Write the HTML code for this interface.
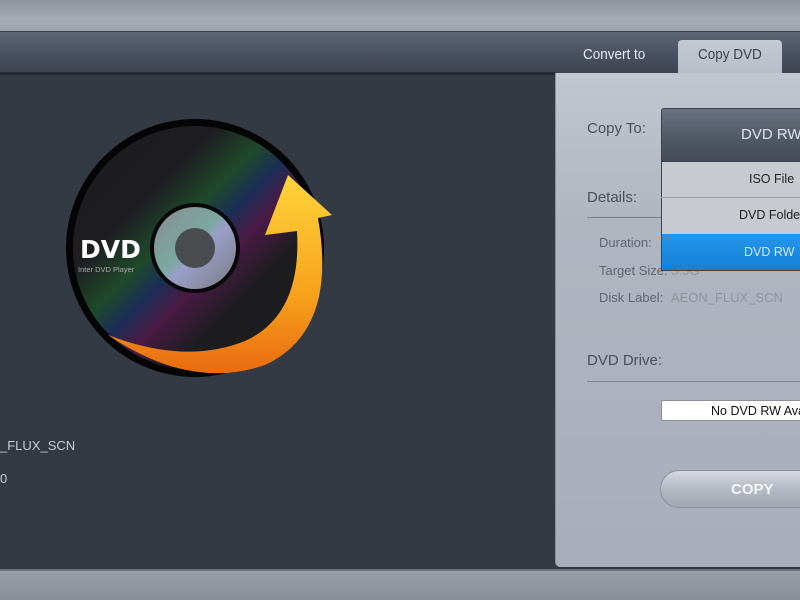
<!DOCTYPE html>
<html><head><style>
*{margin:0;padding:0;box-sizing:border-box}
body{width:800px;height:600px;overflow:hidden;position:relative;background:#343a43;font-family:"Liberation Sans",sans-serif}
.abs{position:absolute;white-space:nowrap}
#top{left:0;top:0;width:800px;height:31px;background:linear-gradient(#8e939e,#a7abb5 60%,#9fa3ae)}
#tabbar{left:0;top:31px;width:800px;height:42px;background:linear-gradient(#5d6474,#4b5261 50%,#3e4452);border-top:1px solid #3b404b}
#tabline{left:0;top:72px;width:800px;height:3px;background:#252a31}
#bottom{left:0;top:569px;width:800px;height:31px;background:linear-gradient(#9a9ea9,#8a8e99);border-top:2px solid #6d717b}
#panel{left:555px;top:73px;width:250px;height:494px;background:linear-gradient(#c2c6cf,#b0b5c0 30%,#a9aebb);border-left:1px solid #8a8f9a;border-radius:0 0 0 5px}
.t{color:#e8ebf0;font-size:15px;transform:scaleX(.9);transform-origin:left}
.lbl{color:#4b505a;font-size:15px}
.sm{color:#5e6470;font-size:13px}
.line{height:1px;background:#7c818c;left:587px;width:213px}
</style></head><body>
<div id="top" class="abs"></div>
<div id="tabbar" class="abs"></div>
<div class="abs t" style="left:583px;top:46px;">Convert to</div>
<div class="abs" style="left:678px;top:40px;width:104px;height:36px;background:linear-gradient(#c4c8d0,#b9bdc6);border-radius:4px 4px 0 0;"></div>
<div class="abs" style="left:698px;top:46px;color:#3d424c;font-size:15px;transform:scaleX(.9);transform-origin:left">Copy DVD</div>
<div id="tabline" class="abs" style="width:555px"></div>
<div id="panel" class="abs"></div>
<div id="bottom" class="abs"></div>

<svg class="abs" style="left:0;top:73px" width="555" height="496">
<defs>
<linearGradient id="rb" x1="0" y1="0" x2="1" y2="1">
<stop offset="0" stop-color="#1c1c1e"/><stop offset=".3" stop-color="#1e1e22"/><stop offset=".42" stop-color="#1f4a2a"/><stop offset=".5" stop-color="#1a2e55"/><stop offset=".58" stop-color="#4a1a45"/><stop offset=".7" stop-color="#1d1d20"/><stop offset="1" stop-color="#1c1c1e"/>
</linearGradient>
<linearGradient id="hub" x1="0" y1="0" x2="1" y2="1">
<stop offset="0" stop-color="#8a8c90"/><stop offset=".45" stop-color="#7aa8a0"/><stop offset=".55" stop-color="#9a9ec8"/><stop offset="1" stop-color="#7a7c80"/>
</linearGradient>
<linearGradient id="ar" x1="0" y1="0" x2="0" y2="1">
<stop offset="0" stop-color="#ffd53a"/><stop offset=".6" stop-color="#f7a21c"/><stop offset="1" stop-color="#e86b10"/>
</linearGradient>
</defs>
<circle cx="195" cy="175" r="129" fill="#050505"/>
<circle cx="195" cy="175" r="122" fill="url(#rb)"/>
<circle cx="195" cy="175" r="45" fill="#080808"/>
<circle cx="195" cy="175" r="41" fill="url(#hub)"/>
<circle cx="195" cy="175" r="20" fill="#4a4c50"/>
<path d="M108 262 Q190 318 265 292 Q338 258 318 145 L332 142 L288 102 L265 162 L297 158 Q302 242 245 268 Q185 292 108 262 Z" fill="url(#ar)"/>
<text x="80" y="185" fill="#fff" font-size="25" font-weight="bold" font-family="DejaVu Sans,sans-serif">DVD</text>
<text x="78" y="199" fill="#aaa" font-size="7.5">Inter DVD Player</text>
<text x="0" y="377" fill="#c7cbd2" font-size="13">_FLUX_SCN</text>
<text x="0" y="410" fill="#c7cbd2" font-size="13">0</text>
</svg>

<div class="abs lbl" style="left:587px;top:120px">Copy To:</div>
<div class="abs lbl" style="left:587px;top:189px">Details:</div>
<div class="abs line" style="top:217px"></div>
<div class="abs sm" style="left:599px;top:235px">Duration:</div>
<div class="abs sm" style="left:599px;top:263px">Target Size: <span style="color:#8e939d">5.5G</span></div>
<div class="abs sm" style="left:599px;top:290px">Disk Label: <span style="color:#8e939d;margin-left:4px">AEON_FLUX_SCN</span></div>
<div class="abs lbl" style="left:587px;top:352px">DVD Drive:</div>
<div class="abs line" style="top:381px"></div>
<div class="abs" style="left:661px;top:400px;width:150px;height:21px;background:#fff;border:1px solid #8a8f98;border-radius:2px;font-size:12.5px;color:#111;padding:3px 0 0 49px">No DVD RW Available</div>
<div class="abs" style="left:660px;top:470px;width:160px;height:38px;border-radius:19px;background:linear-gradient(#d5d8df,#b5b9c3 50%,#a2a7b2);border:1px solid #8c919c;color:#f4f5f7;font-size:15px;font-weight:bold;padding:10px 0 0 70px">COPY</div>

<div class="abs" style="left:661px;top:108px;width:150px;height:55px;background:linear-gradient(#6a7180,#4f5664 60%,#454b58);border:1px solid #3a3f49;border-radius:3px 0 0 0;color:#dfe3ea;font-size:15px;padding:17px 0 0 79px">DVD RW</div>
<div class="abs" style="left:661px;top:161px;width:150px;height:110px;background:#c7cacf;border:1px solid #3e424a;"></div>
<div class="abs" style="left:661px;top:161px;width:150px;height:37px;border-bottom:1px solid #9ea2a8;color:#222;font-size:12.5px;padding:11px 0 0 88px">ISO File</div>
<div class="abs" style="left:662px;top:208px;width:149px;color:#222;font-size:12.5px;padding-left:77px">DVD Folder</div>
<div class="abs" style="left:662px;top:234px;width:149px;height:36px;background:linear-gradient(#2596ea,#1580d6);color:#cfe6ff;font-size:12.5px;padding:11px 0 0 82px">DVD RW</div>
</body></html>
